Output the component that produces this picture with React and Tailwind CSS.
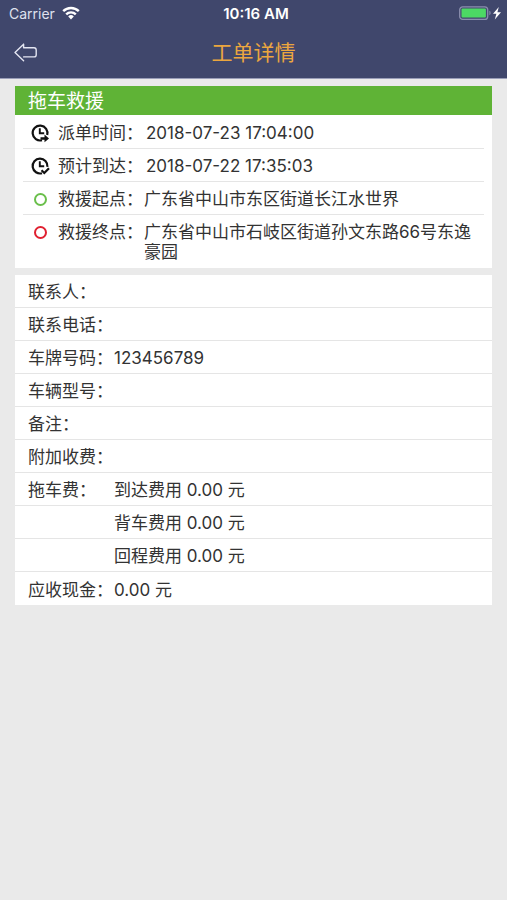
const FONT = "font-['Inter','Noto_Sans_CJK_SC',sans-serif]";

function WifiIcon() {
  return (
    <svg className="h-4 w-5" viewBox="0 0 20 16" fill="none" stroke="#fff" strokeWidth="2.4" aria-hidden="true">
      <path d="M2.2 5.2a11 11 0 0 1 15.6 0" />
      <path d="M5.2 8.4a6.8 6.8 0 0 1 9.6 0" />
      <path d="M10 13.6l-2.800-3.200a4 4 0 0 1 5.600 0z" fill="#fff" stroke="none" />
    </svg>
  );
}

function BatteryIcon() {
  return (
    <svg className="h-4 w-11" viewBox="0 0 44 16" aria-hidden="true">
      <rect x="0.7" y="0.8" width="28" height="12.600" rx="3" fill="none" stroke="#8b8fae" strokeWidth="1.3" />
      <rect x="2.500" y="2.600" width="24.400" height="9" rx="1" fill="#4cd964" />
      <path d="M30.400 4.800c1.600.6 1.600 3.800 0 4.400z" fill="#8b8fae" />
      <path d="M39.800 1l-5.800 6.800h3.400l-1.600 5.800 6.200-7.400h-3.600z" fill="#fff" />
    </svg>
  );
}

function BackIcon() {
  return (
    <svg className="h-5 w-6" viewBox="0 0 24 20" fill="none" stroke="#e4e6f2" strokeWidth="1.400" strokeLinejoin="round" strokeLinecap="round" aria-hidden="true">
      <path d="M9.600 1.200L1 9.500l8.600 8.300M9.600 1.200v3.500h10.400c1.400 0 2.200.8 2.200 2.200v4.800c0 1.400-.8 2.200-2.200 2.200H9.600" />
    </svg>
  );
}

function ClockIcon({ variant }) {
  return (
    <svg className="size-5" viewBox="0 0 20 20" fill="none" stroke="#111" strokeWidth="2.200" aria-hidden="true">
      {variant === 'arrow' ? (
        <>
          <path d="M12 17.200A7.400 7.400 0 1 1 17.200 12" />
          <path d="M10.500 14.200h4v-2.700l4.500 4-4.500 3.800v-2.600h-4z" fill="#111" stroke="none" />
        </>
      ) : (
        <>
          <path d="M12 17.200A7.400 7.400 0 1 1 17.400 10.800" />
          <path d="M11.500 14.200l2.800 2.800 4.700-4.800" />
        </>
      )}
      <path d="M9.800 5.200v5h4.400" strokeWidth="1.900" />
    </svg>
  );
}

function RingIcon({ className }) {
  return <span className={`block size-[13px] rounded-full border-2 ${className}`} />;
}

const trip = [
  { icon: <ClockIcon variant="arrow" />, label: '派单时间：', value: '2018-07-23 17:04:00', time: true },
  { icon: <ClockIcon variant="check" />, label: '预计到达：', value: '2018-07-22 17:35:03', time: true },
  { icon: <RingIcon className="border-[#6abf4b]" />, label: '救援起点：', value: '广东省中山市东区街道长江水世界' },
  { icon: <RingIcon className="border-[#e02030]" />, label: '救援终点：', value: '广东省中山市石岐区街道孙文东路66号东逸豪园' },
];

const details = [
  ['联系人：', ''],
  ['联系电话：', ''],
  ['车牌号码：', '123456789'],
  ['车辆型号：', ''],
  ['备注：', ''],
  ['附加收费：', ''],
  ['拖车费：', '到达费用 0.00 元'],
  ['', '背车费用 0.00 元'],
  ['', '回程费用 0.00 元'],
  ['应收现金：', '0.00 元'],
];

export default function App() {
  return (
    <div className={`min-h-screen bg-[#eaeaea] text-[17px] leading-5 text-[#333] ${FONT}`}>
      <header className="border-b border-[#9a9eb8] bg-[#40476c] pb-3">
        <div className="grid h-7 grid-cols-3 items-center pr-1 pl-[9px] text-sm text-white">
          <div className="flex items-center gap-1.5">
            <span className="text-[#dfe1ee]">Carrier</span>
            <WifiIcon />
          </div>
          <span className="text-center text-[15px] font-semibold">10:16 AM</span>
          <div className="flex justify-end">
            <BatteryIcon />
          </div>
        </div>
        <div className="grid h-[38px] grid-cols-[52px_1fr_52px] items-center pt-3">
          <button type="button" aria-label="返回" className="flex justify-center">
            <BackIcon />
          </button>
          <h1 className="text-center text-[21px] leading-6 text-[#eba63f]">工单详情</h1>
        </div>
      </header>

      <main className="flex flex-col gap-[7px] px-[15px] pt-[7px]">
        <section className="bg-white pb-px">
          <h2 className="bg-[#5fb336] px-[13px] pt-[5px] pb-[3px] text-[19px] leading-[21px] text-white">拖车救援</h2>
          <dl className="divide-y divide-[#e5e5e5] px-2 pt-px">
            {trip.map((row) => (
              <div key={row.label} className="flex min-h-[33px] pt-[7px] pb-[5px] pl-[7px]">
                <span className="flex size-5 shrink-0 items-center justify-center">{row.icon}</span>
                <dt className="ml-2 w-[86px] shrink-0">{row.label}</dt>
                <dd className={row.time ? 'pl-0.5' : ''}>{row.value}</dd>
              </div>
            ))}
          </dl>
        </section>

        <section className="bg-white">
          <dl className="divide-y divide-[#e5e5e5]">
            {details.map(([label, value]) => (
              <div key={label + value} className="flex h-[33px] items-center px-[13px] pt-0.5">
                <dt className="w-[86px] shrink-0">{label}</dt>
                <dd>{value}</dd>
              </div>
            ))}
          </dl>
        </section>
      </main>
    </div>
  );
}
